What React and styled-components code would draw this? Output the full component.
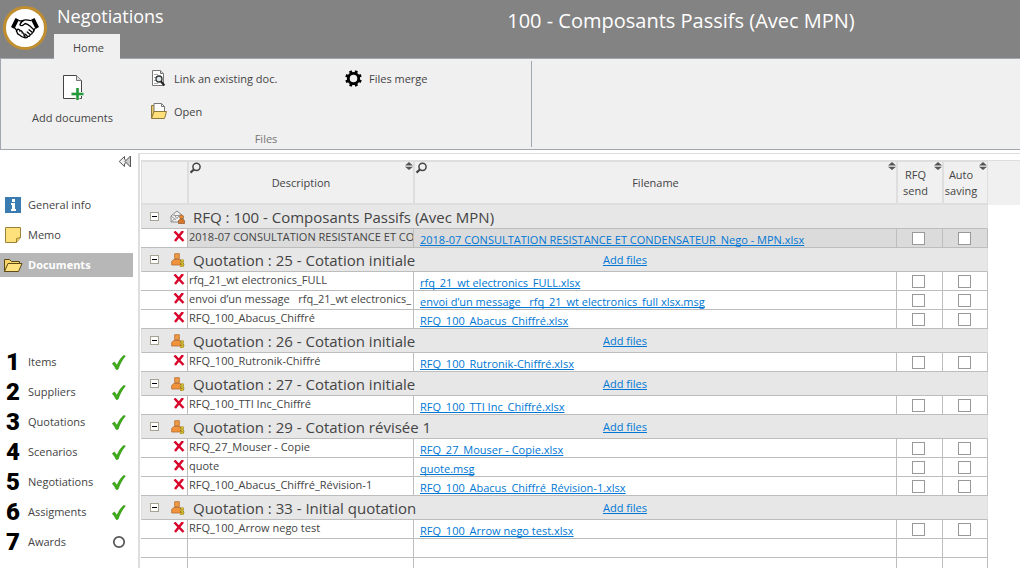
import React, { useState } from "react";
import styled, { createGlobalStyle } from "styled-components";

const GlobalStyle = createGlobalStyle`
  * {
    box-sizing: border-box;
  }
  body {
    margin: 0;
    background-color: #fff;
    color: #444;
    font-family: "Open Sans", "Noto Sans", sans-serif;
    font-size: 11px;
    line-height: 16px;
  }
  button,
  input {
    font: inherit;
    color: inherit;
    margin: 0;
  }
`;

const Page = styled.div`
  height: 100vh;
  display: flex;
  flex-direction: column;
  overflow: hidden;
`;
const Header = styled.header`
  display: flex;
  height: 58px;
  flex-shrink: 0;
  padding-left: 3px;
  background-color: #838383;
  color: #fff;
`;
const LogoCircle = styled.div`
  display: flex;
  justify-content: center;
  align-items: center;
  width: 44px;
  height: 44px;
  margin-top: 6px;
  border: 3px solid #c08e2f;
  border-radius: 50%;
  background-color: #fff;
`;
const Brand = styled.div`
  display: flex;
  flex-direction: column;
  justify-content: space-between;
  align-items: flex-start;
  width: 295px;
  padding: 4px 0 0 7px;
`;
const AppName = styled.div`
  padding-left: 3px;
  font-size: 18px;
  line-height: 24px;
`;
const Title = styled.h1`
  flex: 1;
  margin: 0;
  padding-top: 8px;
  text-align: center;
  font-size: 20px;
  font-weight: 400;
  line-height: 26px;
`;
const Tab = styled.button`
  position: relative;
  width: 66px;
  height: 25px;
  margin-bottom: -1px;
  padding: 2px 0 0 3px;
  border: 0;
  background-color: #f0f0f0;
  color: #444;
  cursor: pointer;
`;
const Ribbon = styled.div`
  flex-shrink: 0;
  height: 92px;
  padding: 2px 0;
  border: 1px solid #a0a7b1;
  border-right: 0;
  background-color: #f0f0f0;
`;
const RibbonGroup = styled.section`
  display: flex;
  flex-direction: column;
  width: 531px;
  height: 100%;
  border-right: 1px solid #a0a7b1;
`;
const RibbonTools = styled.div`
  display: grid;
  grid-template-columns: 143px 189px 1fr;
  column-gap: 6px;
  flex: 1;
`;
const RibbonColumn = styled.div`
  padding-top: 1px;
`;
const RibbonCaption = styled.div`
  text-align: center;
  color: #777;
`;
const LargeButton = styled.button`
  display: flex;
  flex-direction: column;
  align-items: center;
  gap: 9px;
  padding: 13px 0 0;
  border: 0;
  background: none;
  cursor: pointer;
`;
const SmallButton = styled.button`
  display: flex;
  align-items: center;
  gap: 7px;
  height: 33px;
  padding: 0;
  border: 0;
  background: none;
  cursor: pointer;
`;
const Body = styled.div`
  display: flex;
  flex: 1;
  min-height: 0;
`;
const Sidebar = styled.nav`
  display: flex;
  flex-direction: column;
  width: 138px;
  flex-shrink: 0;
  padding: 5px 5px 0 0;
`;
const CollapseButton = styled.button`
  display: flex;
  align-self: flex-end;
  padding: 0;
  border: 0;
  margin-bottom: 24px;
  background: none;
  cursor: pointer;
`;
const NavList = styled.ul`
  display: flex;
  flex-direction: column;
  gap: 6px;
  margin: 0 0 73px;
  padding: 0;
  list-style: none;
`;
const NavItem = styled.a`
  display: grid;
  grid-template-columns: 20px 1fr 14px;
  column-gap: 4px;
  align-items: center;
  justify-items: start;
  height: 24px;
  padding: 0 7px 0 4px;
  background-color: ${(props) => (props.$active ? "#b7b7b7" : "transparent")};
  color: ${(props) => (props.$active ? "#fff" : "#444")};
  font-weight: ${(props) => (props.$active ? 700 : 400)};
  text-decoration: none;
`;
const StepNumber = styled.span`
  width: 18px;
  text-align: center;
  color: #000;
  font-family: Roboto, "Open Sans", sans-serif;
  font-size: 24px;
  font-weight: 900;
  line-height: 24px;
`;
const Main = styled.main`
  flex: 1;
  min-width: 0;
  margin-top: 3px;
  padding: 6px 0 0 1px;
  border-top: 1px solid #dedede;
  border-left: 2px solid #dedede;
`;
const Table = styled.table`
  width: 100%;
  table-layout: fixed;
  border-collapse: separate;
  border-spacing: 0;
`;
const Col = styled.col`
  width: ${(props) => (props.$width ? props.$width + "px" : "auto")};
`;
const HeadCell = styled.th`
  position: relative;
  height: 45px;
  padding: 1px ${(props) => (props.$narrow ? "9px" : "0")} 0 0;
  border: 0 solid #dedede;
  border-width: ${(props) => (props.$spacer ? "1px 0 0" : "2px 1px")};
  background-color: #f0f0f0;
  font-weight: 400;
`;
const SearchCorner = styled.span`
  position: absolute;
  top: 0;
  left: 0;
  display: flex;
`;
const SortCorner = styled.span`
  position: absolute;
  top: 0;
  right: 0;
  display: flex;
`;
const GroupCell = styled.td`
  height: 24px;
  padding: 0;
  border-right: 1px solid #dedede;
  border-bottom: 1px solid #bdbdbd;
  border-left: 1px solid #dedede;
  background-color: #e7e7e7;
`;
const GroupLine = styled.div`
  display: grid;
  grid-template-columns: 461px 1fr;
  align-items: center;
  height: 23px;
`;
const GroupTitle = styled.div`
  display: grid;
  grid-template-columns: 9px 16px 1fr;
  align-items: center;
  padding-left: 8px;
  font-size: 15px;
  line-height: 22px;
  white-space: nowrap;

  svg {
    margin-left: 11px;
  }
  span {
    padding-left: 18px;
  }
`;
const ToggleButton = styled.button`
  position: relative;
  width: 9px;
  height: 9px;
  padding: 0;
  border: 1px solid #a5a28f;
  background: linear-gradient(#000, #000) center / 5px 1px no-repeat #fff;
  cursor: pointer;
`;
const Cell = styled.td`
  height: 19px;
  padding: 0;
  border-right: 1px solid #bdbdbd;
  border-bottom: 1px solid #bdbdbd;
  background-color: ${(props) => (props.$selected ? "#dbdbdb" : "#fff")};
  vertical-align: top;
  line-height: 16px;
  overflow: hidden;
  white-space: pre;
`;
const Description = styled.div`
  margin: 0 0 0 1px;
  overflow: hidden;
`;
const FileLink = styled.a`
  display: block;
  padding: 3px 0 0 6px;
  line-height: 15px;
  color: #0077d4;
  text-decoration-skip-ink: none;
`;
const AddLink = styled.a`
  color: #0077d4;
`;
const DeleteButton = styled.button`
  display: flex;
  margin-left: auto;
  padding: 2px 2px 0 0;
  border: 0;
  background: none;
  cursor: pointer;
`;
const CheckBox = styled.input`
  appearance: none;
  display: block;
  width: 13px;
  height: 13px;
  margin: 3px 0 0 15px;
  border: 1px solid #999;
  background-color: ${(props) => (props.checked ? "#0077d4" : "#fff")};
`;

const HandshakeIcon = () => (
  <svg width="28" height="22" viewBox="0 0 28 22">
    <path d="M4.5 1 8 2.8 3.4 12 0 10zM23.5 1 20 2.8l4.6 9.2L28 10z" fill="#000" />
    <g fill="none" stroke="#000" strokeWidth="1.3" strokeLinecap="round" strokeLinejoin="round">
      <path d="M8 3.6c2 .7 3.5.3 5-.4M20 3.6c-2.500.2-4.500-1.400-6.800-.5-2 .9-3.600 2.700-4.300 4.700.9 1.300 2.600 1 3.700 0l1.600-1.300c1.800.4 3.200 1.300 4.700 2.600l4 3.600" />
      <path d="M4.200 11.500l1.500 1.800M24 11.500l-1.300 2" />
      <path d="M5.800 13.300c1-1.700 3.200-1.300 3 .7 1.700-.7 2.900.5 2.300 1.900 1.600-.2 2.400 1 1.700 2.300 1.200 0 1.700 1.300.7 2.300-2.200 0-4-1.500-5-2.700-1.600-.4-2.600-1.500-2.300-2.600-.9-.4-1-1.300-.4-1.900z" />
      <path d="M13.500 20.300c1.300 1 3 .4 3.100-.9 1.500.3 2.700-.7 2.500-1.900 1.500.1 2.400-1 2.100-2.200 1.300 0 2-1.100 1.500-2.300M14.400 17.300l2.200 2.100M16.200 15l2.900 2.500M18 12.800l3.200 2.500" />
    </g>
  </svg>
);
const AddDocumentIcon = () => (
  <svg width="22" height="27" viewBox="0 0 22 27">
    <path d="M1.500 1.500h13l5 5v18h-18z" fill="#fff" stroke="#444" />
    <path d="M14.500 1.500v5h5" fill="#ddd" stroke="#777" />
    <path d="M15.500 14v12M9.500 20h12" stroke="#f0f0f0" strokeWidth="4" />
    <path d="M15.500 14v12M9.500 20h12" stroke="#239b3b" strokeWidth="2.600" />
  </svg>
);
const SearchDocumentIcon = () => (
  <svg width="17" height="17" viewBox="0 0 17 17">
    <path d="M2.500.5h8l3 3v12h-11z" fill="#fff" stroke="#777" />
    <path d="M10.500.5v3h3" fill="#ccc" stroke="#777" />
    <path d="M4 4.500h4M4 7.500h2M4 10.500h2M4 13.500h4" stroke="#aaa" />
    <circle cx="9" cy="9" r="3" fill="#dce9ef" stroke="#333" strokeWidth="1.300" />
    <path d="M11 11.500l3.400 4" stroke="#222" strokeWidth="2" />
  </svg>
);
const OpenIcon = () => (
  <svg width="17" height="17" viewBox="0 0 17 17">
    <path d="M1.500 15V2.500h3v11" fill="#e8c964" stroke="#8e793d" />
    <path d="M4 12V.5h7.500l3 3V10z" fill="#fff" stroke="#777" />
    <path d="M11.500.5v3h3" fill="none" stroke="#777" />
    <path d="M4 8.500h12.500l-2 7h-13z" fill="#ffe07a" stroke="#8e793d" strokeLinejoin="round" />
  </svg>
);
const GearIcon = () => (
  <svg width="17" height="17" viewBox="0 0 17 17">
    <circle cx="8.500" cy="8.500" r="5.200" fill="none" stroke="#000" strokeWidth="2.800" />
    {[22, 67, 112, 157, 202, 247, 292, 337].map((angle) => (
      <path key={angle} d="M7.100.2h2.800V3H7.100z" transform={`rotate(${angle} 8.500 8.500)`} />
    ))}
  </svg>
);
const CollapseIcon = () => (
  <svg width="15" height="14" viewBox="0 0 15 14">
    <path d="M6.500 1.500 1.200 6.500l5.300 5V9L9 6.500 6.500 4z" fill="#eee" stroke="#555" />
    <path d="M12.500 1 7 6.500l5.500 5.500z" fill="#ccc" stroke="#555" />
  </svg>
);
const InfoIcon = () => (
  <svg width="18" height="16" viewBox="0 0 18 16">
    <path d="M1 0h16v16H1z" fill="#3a7cb2" />
    <path d="M8 2h3v3H8zM7 6h4v6h1v2H7v-2h1V8H7z" fill="#fff" />
  </svg>
);
const MemoIcon = () => (
  <svg width="18" height="16" viewBox="0 0 18 16">
    <path d="M1.500.5h15v10l-4 5h-11z" fill="#ffe17b" stroke="#9a8236" />
    <path d="M12.500 15.500v-4l4-1" fill="#f5cf55" stroke="#9a8236" />
  </svg>
);
const FolderIcon = () => (
  <svg width="19" height="14" viewBox="0 0 19 14">
    <path d="M.5 13.500v-12h5l2 2h8v3" fill="#f6d369" stroke="#5d4b17" />
    <path d="M.5 13.500l3.500-8h14l-3.500 8z" fill="#ffe180" stroke="#5d4b17" />
  </svg>
);
const TickIcon = () => (
  <svg width="14" height="15" viewBox="0 0 14 15">
    <path d="M.3 8.600 2.500 7l2.500 3.500C6.600 6.300 8.800 3 11.700.6l1.600.3C9.800 5.300 7.600 9.500 6.100 14.200l-2 .2C3.100 12 1.800 10.100.3 8.600z" fill="#3dae16" stroke="#278a08" strokeWidth=".6" />
  </svg>
);
const CircleIcon = () => (
  <svg width="14" height="14" viewBox="0 0 14 14">
    <circle cx="7" cy="7" r="5.200" fill="#fff" stroke="#555" strokeWidth="1.700" />
  </svg>
);
const SearchIcon = () => (
  <svg width="12" height="12" viewBox="0 0 12 12">
    <circle cx="7.500" cy="4.800" r="3.600" fill="none" stroke="#444" strokeWidth="1.500" />
    <path d="M4.900 7.500 1.500 10.600" stroke="#444" strokeWidth="2.200" />
  </svg>
);
const SortIcon = () => (
  <svg width="8" height="8" viewBox="0 0 8 8">
    <path d="M4 0l4 3.500H0zM0 4.800h8L4 8z" fill="#555" />
  </svg>
);
const MailIcon = () => (
  <svg width="15" height="14" viewBox="0 0 15 14">
    <path d="M1 6l6-5 6 5v6H1z" fill="#f1f1f1" stroke="#888" />
    <path d="M3.500 5.500h7M4 4.500l3 4 3-4M1 12l4.500-4M1 6l5 4" fill="none" stroke="#999" />
    <circle cx="11.500" cy="7" r="2" fill="#e98937" stroke="#9a5a25" strokeWidth=".6" />
    <path d="M8.500 13.500v-3l2-1.500h2l2 1.500v3z" fill="#d9772b" stroke="#7c4a24" strokeWidth=".6" />
  </svg>
);
const SupplierIcon = () => (
  <svg width="15" height="14" viewBox="0 0 15 14">
    <path d="M4.700.7h4.600v5H4.700z" fill="#f19a45" stroke="#b5692a" strokeWidth=".8" />
    <path d="M1.700 12V8.500l2-2h6.600l2 2V12z" fill="#f0933c" stroke="#b5692a" strokeWidth=".8" />
    <path d="M14 7.800h-2.400c-1.200 0-1.200 2.500 0 2.500h.9c1.200 0 1.200 2.500 0 2.500H10M12.200 6.500V14" fill="none" stroke="#86701a" strokeWidth="1.900" />
    <path d="M14 7.800h-2.400c-1.200 0-1.200 2.500 0 2.500h.9c1.200 0 1.200 2.500 0 2.500H10M12.200 6.500V14" fill="none" stroke="#e8cd3c" strokeWidth=".9" />
  </svg>
);
const CrossIcon = () => (
  <svg width="12" height="12" viewBox="0 0 12 12">
    <path d="M1.500.5l9 9.500M10 0 2 10" stroke="#d9062b" strokeWidth="2.500" />
  </svg>
);

const links = [
  { label: "General info", icon: <InfoIcon /> },
  { label: "Memo", icon: <MemoIcon /> },
  { label: "Documents", icon: <FolderIcon />, active: true },
];
const steps = [
  { label: "Items", done: true },
  { label: "Suppliers", done: true },
  { label: "Quotations", done: true },
  { label: "Scenarios", done: true },
  { label: "Negotiations", done: true },
  { label: "Assigments", done: true },
  { label: "Awards", done: false },
];
const groups = [
  {
    title: "RFQ : 100 - Composants Passifs (Avec MPN)",
    rfq: true,
    files: [
      {
        description: "2018-07 CONSULTATION RESISTANCE ET COND",
        filename: "2018-07 CONSULTATION RESISTANCE ET CONDENSATEUR_Nego - MPN.xlsx",
        selected: true,
      },
    ],
  },
  {
    title: "Quotation : 25 - Cotation initiale",
    files: [
      { description: "rfq_21_wt electronics_FULL", filename: "rfq_21_wt electronics_FULL.xlsx" },
      {
        description: "envoi d’un message   rfq_21_wt electronics_",
        filename: "envoi d’un message   rfq_21_wt electronics_full xlsx.msg",
      },
      { description: "RFQ_100_Abacus_Chiffré", filename: "RFQ_100_Abacus_Chiffré.xlsx" },
    ],
  },
  {
    title: "Quotation : 26 - Cotation initiale",
    files: [{ description: "RFQ_100_Rutronik-Chiffré", filename: "RFQ_100_Rutronik-Chiffré.xlsx" }],
  },
  {
    title: "Quotation : 27 - Cotation initiale",
    files: [{ description: "RFQ_100_TTI Inc_Chiffré", filename: "RFQ_100_TTI Inc_Chiffré.xlsx" }],
  },
  {
    title: "Quotation : 29 - Cotation révisée 1",
    files: [
      { description: "RFQ_27_Mouser - Copie", filename: "RFQ_27_Mouser - Copie.xlsx" },
      { description: "quote", filename: "quote.msg" },
      { description: "RFQ_100_Abacus_Chiffré_Révision-1", filename: "RFQ_100_Abacus_Chiffré_Révision-1.xlsx" },
    ],
  },
  {
    title: "Quotation : 33 - Initial quotation",
    files: [{ description: "RFQ_100_Arrow nego test", filename: "RFQ_100_Arrow nego test.xlsx" }],
  },
];

function FileRow({ file }) {
  const [send, setSend] = useState(false);
  const [saving, setSaving] = useState(false);
  return (
    <tr>
      <Cell>
        <DeleteButton aria-label={"Delete " + file.description}>
          <CrossIcon />
        </DeleteButton>
      </Cell>
      <Cell $selected={file.selected}>
        <Description>{file.description}</Description>
      </Cell>
      <Cell $selected={file.selected}>
        <FileLink href="#">{file.filename}</FileLink>
      </Cell>
      <Cell $selected={file.selected}>
        <CheckBox
          type="checkbox"
          aria-label="RFQ send"
          checked={send}
          onChange={(e) => setSend(e.target.checked)}
        />
      </Cell>
      <Cell $selected={file.selected}>
        <CheckBox
          type="checkbox"
          aria-label="Auto saving"
          checked={saving}
          onChange={(e) => setSaving(e.target.checked)}
        />
      </Cell>
    </tr>
  );
}

function Group({ group }) {
  const [open, setOpen] = useState(true);
  return (
    <tbody>
      <tr>
        <GroupCell colSpan={5}>
          <GroupLine>
            <GroupTitle>
              <ToggleButton
                aria-label={"Toggle " + group.title}
                aria-expanded={open}
                onClick={() => setOpen(!open)}
              />
              {group.rfq ? <MailIcon /> : <SupplierIcon />}
              <span>{group.title}</span>
            </GroupTitle>
            {group.rfq ? null : (
              <div>
                <AddLink href="#">Add files</AddLink>
              </div>
            )}
          </GroupLine>
        </GroupCell>
      </tr>
      {open ? group.files.map((file) => <FileRow key={file.filename} file={file} />) : null}
    </tbody>
  );
}

function DocumentsTable() {
  return (
    <Table>
      <colgroup>
        <Col $width={47} />
        <Col $width={226} />
        <Col />
        <Col $width={46} />
        <Col $width={45} />
        <Col $width={32} />
      </colgroup>
      <thead>
        <tr>
          <HeadCell />
          <HeadCell>
            <SearchCorner>
              <SearchIcon />
            </SearchCorner>
            Description
            <SortCorner>
              <SortIcon />
            </SortCorner>
          </HeadCell>
          <HeadCell>
            <SearchCorner>
              <SearchIcon />
            </SearchCorner>
            Filename
            <SortCorner>
              <SortIcon />
            </SortCorner>
          </HeadCell>
          <HeadCell $narrow>
            RFQ send
            <SortCorner>
              <SortIcon />
            </SortCorner>
          </HeadCell>
          <HeadCell $narrow>
            Auto saving
            <SortCorner>
              <SortIcon />
            </SortCorner>
          </HeadCell>
          <HeadCell $spacer />
        </tr>
      </thead>
      {groups.map((group) => (
        <Group key={group.title} group={group} />
      ))}
      <tbody>
        {[0, 1].map((row) => (
          <tr key={row}>
            <Cell />
            <Cell />
            <Cell />
            <Cell />
            <Cell />
          </tr>
        ))}
      </tbody>
    </Table>
  );
}

export default function App() {
  return (
    <Page>
      <GlobalStyle />
      <Header>
        <LogoCircle>
          <HandshakeIcon />
        </LogoCircle>
        <Brand>
          <AppName>Negotiations</AppName>
          <Tab>Home</Tab>
        </Brand>
        <Title>100 - Composants Passifs (Avec MPN)</Title>
      </Header>
      <Ribbon>
        <RibbonGroup>
          <RibbonTools>
            <LargeButton>
              <AddDocumentIcon />
              Add documents
            </LargeButton>
            <RibbonColumn>
              <SmallButton>
                <SearchDocumentIcon />
                Link an existing doc.
              </SmallButton>
              <SmallButton>
                <OpenIcon />
                Open
              </SmallButton>
            </RibbonColumn>
            <RibbonColumn>
              <SmallButton>
                <GearIcon />
                Files merge
              </SmallButton>
            </RibbonColumn>
          </RibbonTools>
          <RibbonCaption>Files</RibbonCaption>
        </RibbonGroup>
      </Ribbon>
      <Body>
        <Sidebar>
          <CollapseButton aria-label="Collapse menu">
            <CollapseIcon />
          </CollapseButton>
          <NavList>
            {links.map((link) => (
              <li key={link.label}>
                <NavItem href="#" $active={link.active}>
                  {link.icon}
                  {link.label}
                </NavItem>
              </li>
            ))}
          </NavList>
          <NavList>
            {steps.map((step, i) => (
              <li key={step.label}>
                <NavItem href="#">
                  <StepNumber>{i + 1}</StepNumber>
                  {step.label}
                  {step.done ? <TickIcon /> : <CircleIcon />}
                </NavItem>
              </li>
            ))}
          </NavList>
        </Sidebar>
        <Main>
          <DocumentsTable />
        </Main>
      </Body>
    </Page>
  );
}
